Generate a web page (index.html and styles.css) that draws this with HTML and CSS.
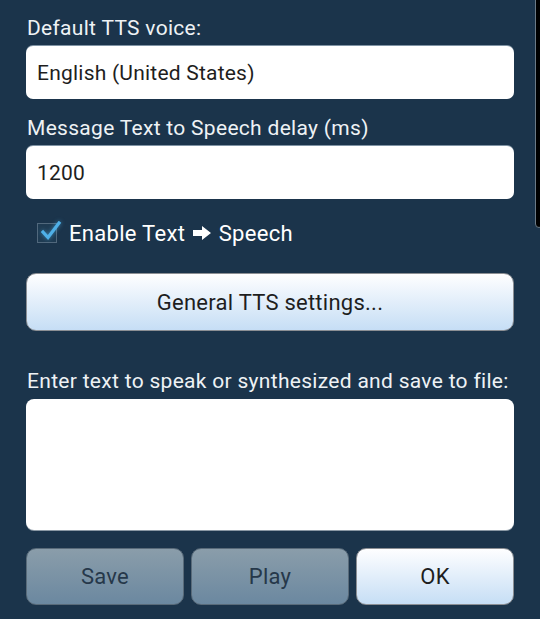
FILE: index.html
```html
<!DOCTYPE html>
<html>
<head>
<meta charset="utf-8">
<link rel="stylesheet" href="styles.css">
</head>
<body>
<div class="scrollbar"></div>
<div class="panel">
  <div class="label first">Default TTS voice:</div>
  <div class="field">English (United States)</div>
  <div class="label">Message Text to Speech delay (ms)</div>
  <div class="field">1200</div>
  <div class="check-row">
    <span class="checkbox">
      <svg class="tick" width="24" height="22" viewBox="0 0 24 22"><path d="M5 11 L10 16.5 L21 2" fill="none" stroke="#4fb0e8" stroke-width="3.2" stroke-linecap="square" stroke-linejoin="miter"/></svg>
    </span>
    <span class="check-text">Enable Text <svg class="arrow" width="20" height="16" viewBox="0 0 20 16"><path d="M1 5 H10 V1 L19 8 L10 15 V11 H1 Z" fill="#fff"/></svg> Speech</span>
  </div>
  <div class="btn light wide">General TTS settings...</div>
  <div class="label third">Enter text to speak or synthesized and save to file:</div>
  <div class="textarea"></div>
  <div class="actions">
    <div class="btn dim">Save</div>
    <div class="btn dim">Play</div>
    <div class="btn light">OK</div>
  </div>
</div>
</body>
</html>
```
FILE: styles.css
```css
html, body {
  margin: 0;
  padding: 0;
  background: #1b344b;
  width: 540px;
  height: 619px;
  overflow: hidden;
  font-family: Roboto, "Noto Sans", sans-serif;
  font-weight: 400;
}
.scrollbar {
  position: absolute;
  top: -4px;
  left: 535px;
  width: 8px;
  height: 232px;
  background: #000;
  border: 1px solid #6b7a86;
  border-radius: 5px;
  box-sizing: border-box;
}
.panel {
  padding: 0 26px;
  display: flex;
  flex-direction: column;
}
.label {
  color: #eef2f5;
  font-size: 21px;
  letter-spacing: 0.3px;
  line-height: 24px;
  height: 24px;
  margin: 17px 0 6px 1px;
}
.label.first { margin-top: 16px; }
.label.third { margin-top: 38px; }
.field {
  background: #fff;
  height: 53px;
  border-radius: 7px;
  box-sizing: border-box;
  padding-left: 11px;
  display: flex;
  align-items: center;
  font-size: 21px;
  letter-spacing: 0.22px;
  color: #1e1e1e;
  box-shadow: 0 -1px 0 #7f93a4;
}
.check-row {
  display: flex;
  align-items: center;
  height: 24px;
  margin: 22px 0 0 11px;
}
.checkbox {
  position: relative;
  width: 20px;
  height: 20px;
  box-sizing: border-box;
  border: 1px solid #51687c;
  background: #1f3b52;
}
.tick {
  position: absolute;
  left: 0;
  top: -3px;
  filter: drop-shadow(0 0 2px rgba(79,176,232,0.6));
}
.check-text {
  margin-left: 12px;
  color: #fff;
  font-size: 22px;
  letter-spacing: 0.3px;
  display: flex;
  align-items: center;
  white-space: pre;
}
.arrow { margin: 0 1px; }
.btn {
  display: flex;
  align-items: center;
  justify-content: center;
  box-sizing: border-box;
  border-radius: 10px;
  font-size: 22px;
  letter-spacing: 0.25px;
}
.btn.light {
  background: linear-gradient(#fefeff, #c6def5);
  border: 1px solid #8c8f94;
  color: #1e1e1e;
}
.btn.wide {
  height: 58px;
  margin-top: 28px;
}
.textarea {
  background: #fff;
  height: 131px;
  border-radius: 8px;
  box-shadow: 0 1px 0 #8a98a4;
}
.actions {
  display: flex;
  gap: 7px;
  margin-top: 18px;
  height: 57px;
}
.actions .btn { flex: 1; }
.btn.dim {
  background: linear-gradient(#8a9daa, #6b88a0);
  border: 1px solid #596b7a;
  color: #26384a;
}
```
